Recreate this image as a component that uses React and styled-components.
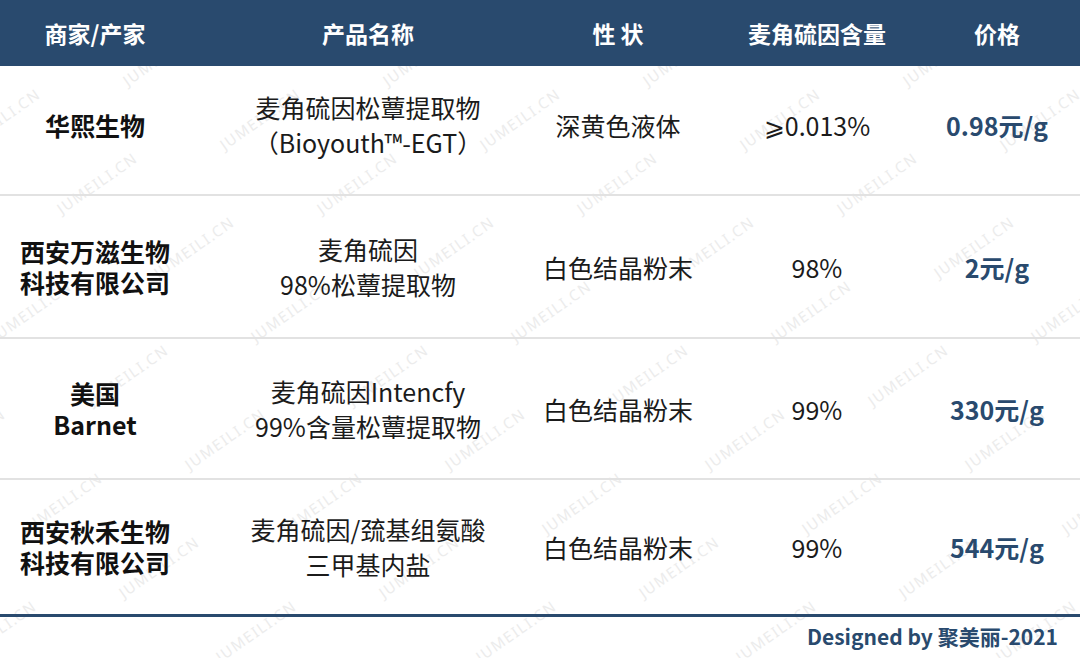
import React from "react"
import styled, { createGlobalStyle } from "styled-components"

const GlobalStyle = createGlobalStyle`
  html, body {
    margin: 0;
    padding: 0;
    background: #ffffff;
  }
  body {
    font-family: "Noto Sans CJK SC", "Noto Sans", sans-serif;
    color: #1b1b1b;
  }
`

const BLUE = "#294a6e"
const COLS = "190px 356px 144px 254px 106px"

const rows = [
  {
    h: 130,
    pb: 10,
    maker: ["华熙生物"],
    name: ["麦角硫因松蕈提取物", "（Bioyouth™-EGT）"],
    look: "深黄色液体",
    content: "⩾0.013%",
    price: "0.98元/g",
  },
  {
    h: 143,
    maker: ["西安万滋生物", "科技有限公司"],
    name: ["麦角硫因", "98%松蕈提取物"],
    look: "白色结晶粉末",
    content: "98%",
    price: "2元/g",
  },
  {
    h: 141,
    maker: ["美国", "Barnet"],
    name: ["麦角硫因Intencfy", "99%含量松蕈提取物"],
    look: "白色结晶粉末",
    content: "99%",
    price: "330元/g",
  },
  {
    h: 137,
    maker: ["西安秋禾生物", "科技有限公司"],
    name: ["麦角硫因/巯基组氨酸", "三甲基内盐"],
    look: "白色结晶粉末",
    content: "99%",
    price: "544元/g",
  },
]

// watermark positions, a loose staggered grid like the source image
const marks = []
for (let r = 0; r < 10; r++) {
  const y = 70 + r * 64
  const offset = ((r * 97) % 260) - 130
  for (let c = 0; c < 6; c++) {
    marks.push({ x: offset + c * 260, y })
  }
}

export default function App() {
  return (
    <>
      <GlobalStyle />
      <Page>
        <Watermarks>
          {marks.map((m, i) => (
            <Mark key={i} style={{ left: m.x, top: m.y }}>
              JUMEILI.CN
            </Mark>
          ))}
        </Watermarks>
        <Table>
          <HeadRow>
            <HeadCell>商家/产家</HeadCell>
            <HeadCell>产品名称</HeadCell>
            <HeadCell>性 状</HeadCell>
            <HeadCell>麦角硫因含量</HeadCell>
            <HeadCell>价格</HeadCell>
          </HeadRow>
          {rows.map((row, i) => (
            <Row key={i} h={row.h} pb={row.pb} last={i === rows.length - 1}>
              <Cell>
                <Maker>
                  {row.maker.map((l) => (
                    <div key={l}>{l}</div>
                  ))}
                </Maker>
              </Cell>
              <Cell>
                <Name>
                  {row.name.map((l) => (
                    <div key={l}>{l}</div>
                  ))}
                </Name>
              </Cell>
              <Cell>
                <Plain>{row.look}</Plain>
              </Cell>
              <Cell>
                <Plain>{row.content}</Plain>
              </Cell>
              <Cell>
                <Price>{row.price}</Price>
              </Cell>
            </Row>
          ))}
        </Table>
        <Footer>Designed by 聚美丽-2021</Footer>
      </Page>
    </>
  )
}

const Page = styled.div`
  position: relative;
  width: 1080px;
  height: 658px;
  overflow: hidden;
  background: #ffffff;
`

const Watermarks = styled.div`
  position: absolute;
  inset: 0;
  z-index: 0;
  pointer-events: none;
`

const Mark = styled.span`
  position: absolute;
  font-family: "Noto Sans", sans-serif;
  font-size: 15px;
  letter-spacing: 1.5px;
  color: #ececec;
  white-space: nowrap;
  transform: rotate(-35deg);
  transform-origin: left bottom;
`

const Table = styled.div`
  position: relative;
  z-index: 1;
  display: flex;
  flex-direction: column;
`

const HeadRow = styled.div`
  display: grid;
  grid-template-columns: ${COLS};
  padding-right: 30px;
  height: 66px;
  background: ${BLUE};
`

const HeadCell = styled.div`
  display: flex;
  align-items: center;
  justify-content: center;
  white-space: nowrap;
  color: #ffffff;
  font-size: 23px;
  font-weight: 700;
`

const Row = styled.div`
  display: grid;
  grid-template-columns: ${COLS};
  box-sizing: border-box;
  padding-right: 30px;
  padding-bottom: ${({ pb }) => pb || 0}px;
  height: ${({ h }) => h}px;
  border-bottom: ${({ last }) => (last ? `3px solid ${BLUE}` : "2px solid #e2e2e2")};
`

const Cell = styled.div`
  display: flex;
  align-items: center;
  justify-content: center;
  white-space: nowrap;
  text-align: center;
`

const Maker = styled.div`
  font-size: 25px;
  font-weight: 700;
  line-height: 31px;
  color: #111111;
`

const Name = styled.div`
  font-size: 25px;
  font-weight: 400;
  line-height: 35px;
`

const Plain = styled.div`
  font-size: 25px;
  font-weight: 400;
`

const Price = styled.div`
  font-size: 25px;
  font-weight: 700;
  color: ${BLUE};
`

const Footer = styled.div`
  position: relative;
  z-index: 1;
  display: flex;
  justify-content: flex-end;
  padding: 4px 22px 0 0;
  font-size: 21px;
  font-weight: 700;
  color: ${BLUE};
`
